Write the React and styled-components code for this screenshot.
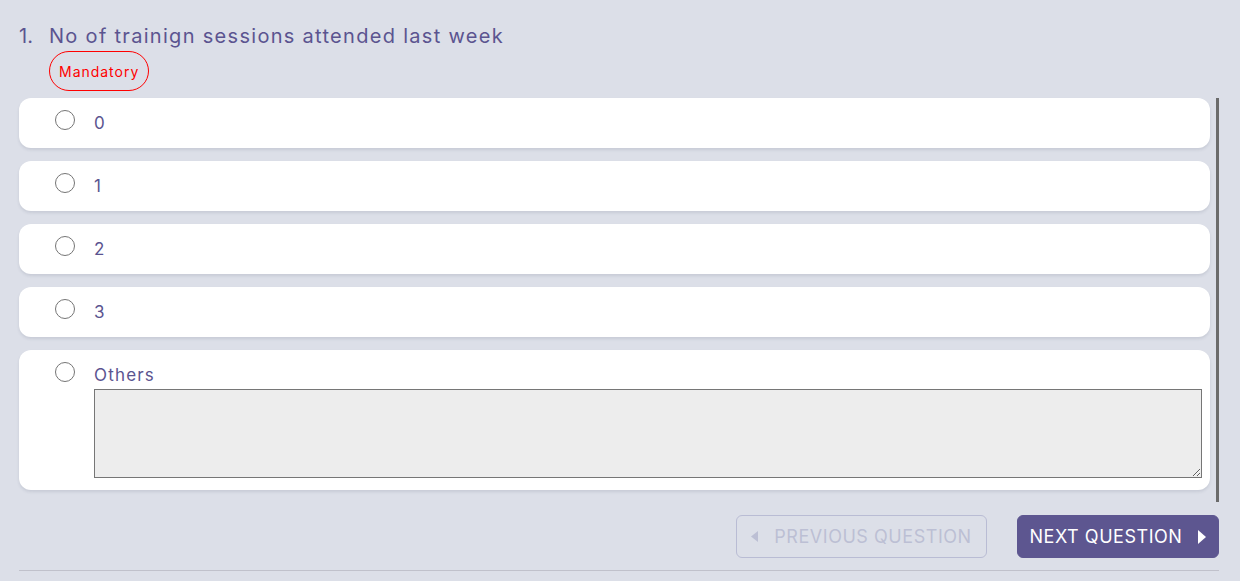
import React, {useState} from 'react';
import {styled, createGlobalStyle} from 'styled-components';

const GlobalStyle = createGlobalStyle`
  body {
    margin: 0;
    background: #dcdfe8;
    font-family: "Inter", "Noto Sans", sans-serif;
    letter-spacing: 0.06em;
  }
`

const Page = styled.main`
  width: 1200px;
  padding: 24px 21px 0 19px;
`

const Title = styled.h1`
  display: flex;
  margin: 0;
  font-size: 20px;
  line-height: 24px;
  font-weight: 400;
  letter-spacing: 1.3px;
  color: #5b5490;
`

const Number = styled.span`
  width: 30px;
  letter-spacing: 0;
`

const MandatoryPill = styled.span`
  display: inline-flex;
  align-items: center;
  height: 38px;
  margin: 3px 0 0 30px;
  padding: 0 9px;
  border: 1px solid #f00;
  border-radius: 20px;
  color: #f00;
  font-size: 14px;
  letter-spacing: 0.07em;
`

const OptionList = styled.div`
  display: flex;
  flex-direction: column;
  gap: 13px;
  margin-top: 7px;
  padding: 0 6px 12px 0;
  border-right: 3px solid #6b6b6b;
`

const OptionCard = styled.label`
  display: flex;
  gap: 19px;
  padding: 12px 8px 12px 36px;
  background: #fff;
  border-radius: 12px;
  box-shadow: 0 2px 3px rgba(60, 64, 90, 0.12);
  cursor: pointer;
`

const Radio = styled.span`
  flex: none;
  box-sizing: border-box;
  width: 20px;
  height: 20px;
  border: 1.5px solid #757575;
  border-radius: 50%;
  background: ${p => p.$checked ? 'radial-gradient(#5d5690 45%, #fff 50%)' : '#fff'};
`

const OptionBody = styled.div`
  flex: 1;
  display: flex;
  flex-direction: column;
  gap: 1px;
`

const OptionText = styled.span`
  font-size: 17px;
  line-height: 26px;
  letter-spacing: 0.07em;
  color: #5b5490;
`

const OtherInput = styled.textarea`
  box-sizing: border-box;
  width: 100%;
  height: 89px;
  margin: 0;
  background: #ededed;
  border: 1px solid #767676;
  font-family: inherit;
  display: block;
`

const ButtonRow = styled.div`
  display: flex;
  justify-content: flex-end;
  gap: 30px;
  margin-top: 13px;
  padding-bottom: 12px;
  border-bottom: 1px solid #c0c1cb;
`

const NavButton = styled.button`
  display: flex;
  align-items: center;
  justify-content: center;
  gap: 16px;
  width: ${p => p.$width}px;
  height: 43px;
  padding: 0;
  border-radius: 6px;
  font-family: inherit;
  font-size: 18px;
  letter-spacing: 0.03em;
  white-space: nowrap;
  text-transform: uppercase;
  border: 1px solid ${p => p.$primary ? '#5d5690' : '#b9bcd4'};
  background: ${p => p.$primary ? '#5d5690' : 'transparent'};
  color: ${p => p.$primary ? '#fff' : '#bcbfd4'};

  &:disabled {
    cursor: default;
  }
`

const Arrow = styled.svg`
  flex: none;
  width: ${p => p.$small ? 7 : 8}px;
  height: ${p => p.$small ? 11 : 14}px;
  fill: currentColor;
`

const options = ['0', '1', '2', '3']

export default function App() {
    const [selected, setSelected] = useState(null)

    return (
        <>
            <GlobalStyle/>
            <Page>
                <Title>
                    <Number>1.</Number>
                    <span>No of trainign sessions attended last week</span>
                </Title>
                <MandatoryPill>Mandatory</MandatoryPill>
                <OptionList>
                    {options.map(option => (
                        <OptionCard key={option} onClick={() => setSelected(option)}>
                            <Radio $checked={selected === option}/>
                            <OptionBody>
                                <OptionText>{option}</OptionText>
                            </OptionBody>
                        </OptionCard>
                    ))}
                    <OptionCard onClick={() => setSelected('others')}>
                        <Radio $checked={selected === 'others'}/>
                        <OptionBody>
                            <OptionText>Others</OptionText>
                            <OtherInput/>
                        </OptionBody>
                    </OptionCard>
                </OptionList>
                <ButtonRow>
                    <NavButton disabled $width={251}>
                        <Arrow $small viewBox='0 0 7 11'><path d='M7 0 L0 5.5 L7 11 Z'/></Arrow>
                        Previous Question
                    </NavButton>
                    <NavButton $primary $width={202}>
                        Next Question
                        <Arrow viewBox='0 0 8 14'><path d='M0 0 L8 7 L0 14 Z'/></Arrow>
                    </NavButton>
                </ButtonRow>
            </Page>
        </>
    )
}
